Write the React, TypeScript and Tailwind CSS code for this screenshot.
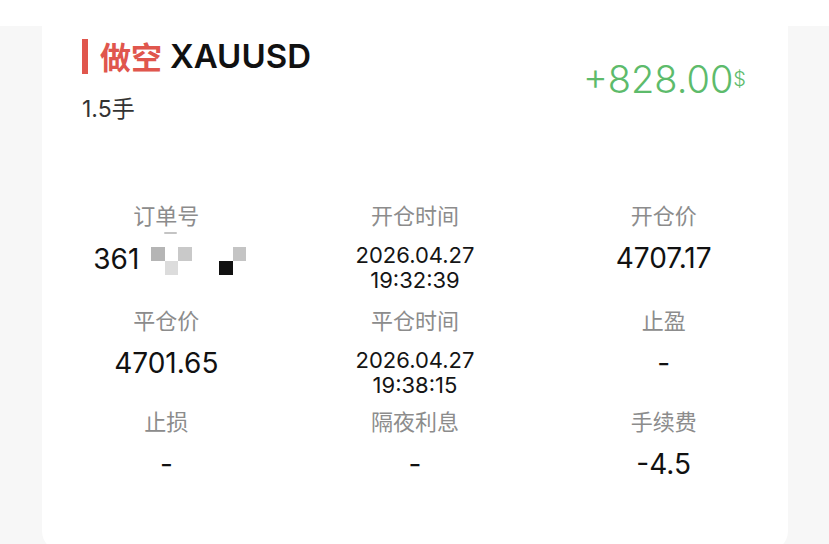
import React from 'react';

const latin = { fontFamily: 'Inter, "Noto Sans CJK SC", sans-serif' };
const cjk = { fontFamily: '"Noto Sans CJK SC", Inter, sans-serif' };

interface Cell {
  label: string;
  value?: string;
  lines?: string[];
  masked?: boolean;
}

const rows: { height: string; cells: Cell[] }[] = [
  {
    height: 'h-[105px]',
    cells: [
      { label: '订单号', value: '361', masked: true },
      { label: '开仓时间', lines: ['2026.04.27', '19:32:39'] },
      { label: '开仓价', value: '4707.17' },
    ],
  },
  {
    height: 'h-[101px]',
    cells: [
      { label: '平仓价', value: '4701.65' },
      { label: '平仓时间', lines: ['2026.04.27', '19:38:15'] },
      { label: '止盈', value: '-' },
    ],
  },
  {
    height: 'h-[100px]',
    cells: [
      { label: '止损', value: '-' },
      { label: '隔夜利息', value: '-' },
      { label: '手续费', value: '-4.5' },
    ],
  },
];

// pixelated privacy mask after the order number
const MaskBlocks: React.FC = () => (
  <span className="relative ml-[12px] mt-[5px] inline-grid grid-cols-[repeat(7,13.6px)] grid-rows-[14px_14px]">
    <span className="absolute left-[13px] top-[-15px] h-[2px] w-[13px] rounded bg-[#c4c4c4]" />
    <span className="bg-[#b5b5b5]" />
    <span />
    <span className="bg-[#c9c9c9]" />
    <span />
    <span />
    <span />
    <span className="bg-[#c4c4c4]" />
    <span />
    <span className="bg-[#dcdcdc]" />
    <span />
    <span />
    <span />
    <span className="bg-[#111111]" />
    <span />
  </span>
);

const InfoCell: React.FC<{ cell: Cell }> = ({ cell }) => (
  <div className="flex flex-col items-center">
    <div className="text-[22px] leading-[28px] text-[#8c8c8c]" style={cjk}>
      {cell.label}
    </div>
    {cell.lines ? (
      <div className="mt-[15px] flex flex-col items-center text-[22px] leading-[25px] text-[#151515]" style={latin}>
        {cell.lines.map((l) => (
          <span key={l}>{l}</span>
        ))}
      </div>
    ) : (
      <div
        className={`mt-[14px] flex items-center text-[28px] leading-[32px] text-[#111111] ${cell.masked ? 'pl-[7px]' : ''}`}
        style={latin}
      >
        <span>{cell.value}</span>
        {cell.masked && <MaskBlocks />}
      </div>
    )}
  </div>
);

export default function App() {
  return (
    <div className="h-[544px] w-full overflow-hidden bg-[linear-gradient(to_bottom,#ffffff_26px,#f7f7f7_26px)] pl-[42px] pr-[41px]">
      <div className="h-[551px] rounded-b-[20px] bg-white">
        <div className="flex items-start justify-between pl-[40px] pr-[42px] pt-[36px]">
          <div>
            <div className="flex h-[40px] items-center">
              <span className="mr-[12px] h-[35px] w-[6px] bg-[#e0564d]" />
              <span className="text-[31px] font-bold leading-[40px] text-[#e0564d]" style={cjk}>
                做空
              </span>
              <span className="ml-[8px] text-[33px] font-semibold leading-[40px] text-[#111111]" style={latin}>
                XAUUSD
              </span>
            </div>
            <div className="mt-[17px] text-[23px] leading-[28px] text-[#333333]" style={latin}>
              1.5<span style={cjk}>手</span>
            </div>
          </div>
          <div className="mt-[19px] flex items-start text-[#5dbb6b]" style={latin}>
            <span className="text-[38px] font-light leading-[48px]">+828.00</span>
            <span className="mt-[12px] text-[20px] font-light leading-[24px]">$</span>
          </div>
        </div>

        <div className="mt-[77px]">
          {rows.map((row, i) => (
            <div key={i} className={`grid grid-cols-3 ${row.height}`}>
              {row.cells.map((c) => (
                <InfoCell key={c.label} cell={c} />
              ))}
            </div>
          ))}
        </div>
      </div>
    </div>
  );
}
